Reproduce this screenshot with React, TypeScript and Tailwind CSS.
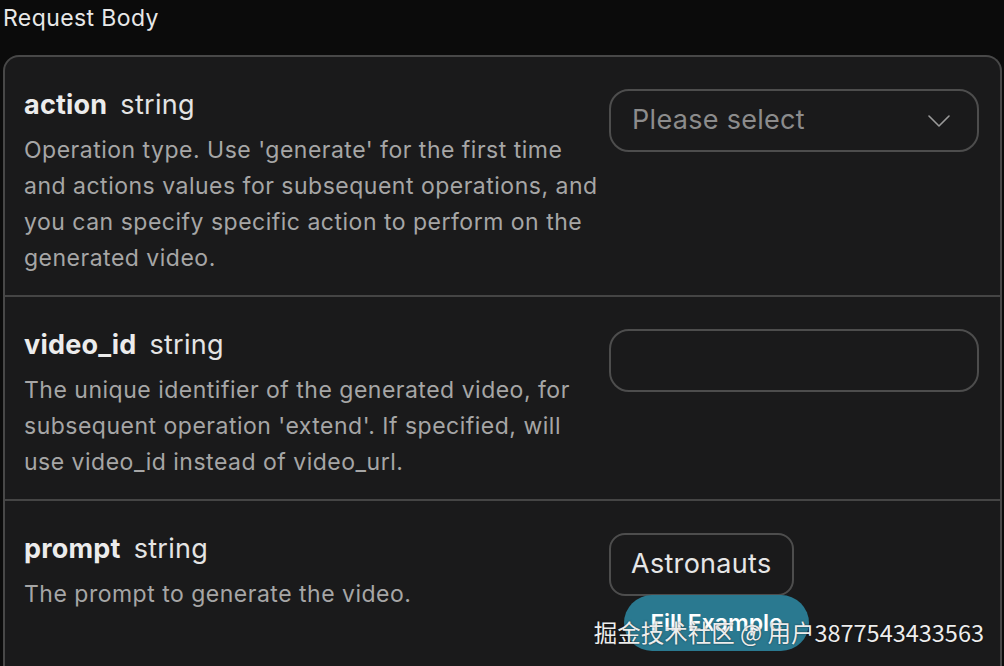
interface Field {
  name: string;
  type: string;
  description: string;
  control: "select" | "input" | "example";
}

const fields: Field[] = [
  {
    name: "action",
    type: "string",
    description:
      "Operation type. Use 'generate' for the first time and actions values for subsequent operations, and you can specify specific action to perform on the generated video.",
    control: "select",
  },
  {
    name: "video_id",
    type: "string",
    description:
      "The unique identifier of the generated video, for subsequent operation 'extend'. If specified, will use video_id instead of video_url.",
    control: "input",
  },
  {
    name: "prompt",
    type: "string",
    description: "The prompt to generate the video.",
    control: "example",
  },
];

function Control({ kind }: { kind: Field["control"] }) {
  if (kind === "select") {
    return (
      <div className="mt-[2px] flex h-[63px] w-[370px] items-center justify-between rounded-[20px] border-2 border-[#4d4d4d] pl-[21px] pr-[26px]">
        <span className="text-[27px] tracking-[0.3px] text-[#8c8c8c]">Please select</span>
        <svg width="22" height="12" viewBox="0 0 22 12" fill="none" className="mr-[1px]">
          <polyline points="1,1 11,11 21,1" stroke="#9a9a9a" strokeWidth="1.6" strokeLinecap="round" strokeLinejoin="round" />
        </svg>
      </div>
    );
  }
  if (kind === "input") {
    return <div className="mt-[2px] h-[63px] w-[370px] rounded-[20px] border-2 border-[#4d4d4d]" />;
  }
  return (
    <div className="mt-[2px] flex flex-col items-start">
      <div className="flex h-[63px] items-center rounded-[16px] border-2 border-[#4d4d4d] px-[20px] text-[27px] tracking-[0.3px] text-[#e6e6e6]">
        Astronauts
      </div>
      <button className="-mt-[1px] ml-[15px] flex h-[56px] w-[185px] items-center justify-center rounded-full bg-[#2a7990] text-[23px] font-semibold text-white">
        Fill Example
      </button>
    </div>
  );
}

function FieldRow({ field, last }: { field: Field; last: boolean }) {
  return (
    <div
      className={`flex gap-[10px] pl-[19px] pr-[21px] pt-[30px] pb-[19px] ${
        last ? "" : "border-b-2 border-[#454545]"
      }`}
    >
      <div className="w-[575px] shrink-0">
        <div className="flex items-baseline gap-[13px] leading-[36px]">
          <span className="text-[27px] font-bold tracking-[0.2px] text-[#ececec]">{field.name}</span>
          <span className="text-[27px] tracking-[0.3px] text-[#e4e4e4]">{field.type}</span>
        </div>
        <p className="mt-[9px] text-[23px] leading-[36px] tracking-[0.5px] text-[#a6a6a6]">
          {field.description}
        </p>
      </div>
      <div className="flex-1">
        <Control kind={field.control} />
      </div>
    </div>
  );
}

export default function App() {
  return (
    <div
      className="relative h-[666px] w-[1004px] overflow-hidden bg-[#0b0b0b]"
      style={{ fontFamily: "Inter, 'Noto Sans', sans-serif" }}
    >
      <div className="flex h-[55px] items-start pl-[3px] pt-[4px] text-[23px] leading-[28px] tracking-[0.4px] text-[#e8e8e8]">
        Request Body
      </div>
      <div className="ml-[3px] mr-[2px] rounded-t-[16px] border-2 border-b-0 border-[#484848] bg-[#1a1a1b]">
        {fields.map((f, i) => (
          <FieldRow key={f.name} field={f} last={i === fields.length - 1} />
        ))}
      </div>
      <div
        className="absolute right-[20px] top-[617px] text-[23.5px] leading-[30px] text-[#ededed]"
        style={{
          fontFamily: "'Noto Sans CJK SC', 'Noto Sans', sans-serif",
          textShadow: "0 0 2px rgba(0,0,0,0.6)",
        }}
      >
        掘金技术社区 @ 用户3877543433563
      </div>
    </div>
  );
}
